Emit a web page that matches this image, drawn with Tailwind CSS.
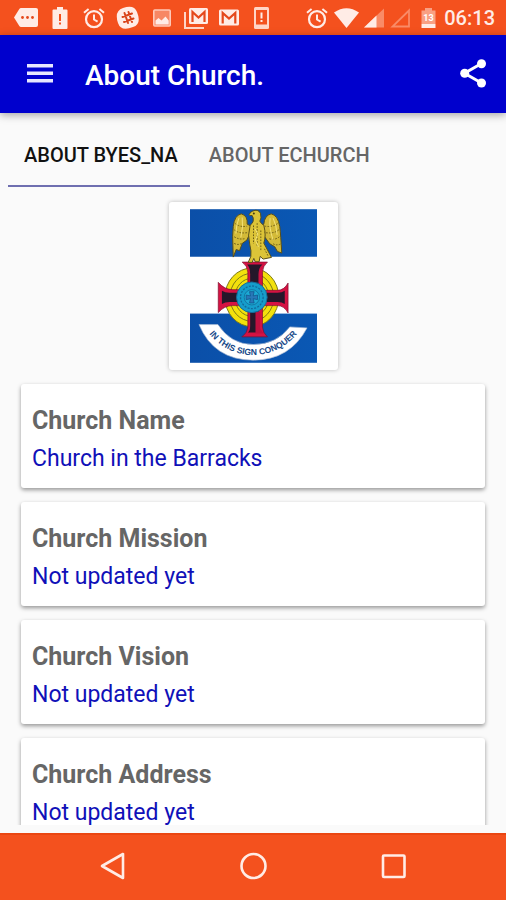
<!DOCTYPE html>
<html lang="en">
<head>
<meta charset="utf-8">
<meta name="viewport" content="width=device-width, initial-scale=1">
<title>About Church</title>
<script src="https://cdn.jsdelivr.net/npm/@tailwindcss/browser@4"></script>
</head>
<body class="flex h-screen flex-col overflow-hidden bg-[#fafafa] font-[Roboto,sans-serif]">

<svg class="hidden" aria-hidden="true">
  <symbol id="alarm" viewBox="0 0 24 24">
    <circle cx="12" cy="13.200" r="8" fill="none" stroke="currentColor" stroke-width="2.200"/>
    <path d="M12 8.500v5l3.600 2.200M2 6.800l4.600-3.900M22 6.800l-4.600-3.900" fill="none" stroke="currentColor" stroke-width="2"/>
  </symbol>
</svg>

<!-- Status bar -->
<div class="flex h-[35px] shrink-0 items-center justify-between bg-[#f4511e] pr-[11px] pl-[14px] text-[#ffece6]">
  <div class="flex items-center gap-[10px]">
    <svg class="size-6" viewBox="0 0 24 24" fill="currentColor"><path d="M7 2h15q2 0 2 2v15q0 2-2 2H7q-1 0-1.700-1L0 11.500 5.300 3Q6 2 7 2z"/><g fill="#e5481b"><circle cx="8.500" cy="11.500" r="1.400"/><circle cx="13.500" cy="11.500" r="1.400"/><circle cx="18.500" cy="11.500" r="1.400"/></g></svg>
    <svg class="size-6" viewBox="0 0 24 24" fill="currentColor"><path d="M9 1h6v2.500h3.500q1 0 1 1V22q0 1-1 1h-13q-1 0-1-1V4.500q0-1 1-1H9z"/><path fill="#f4511e" d="M11 8h2v7h-2zM11 16.500h2v2h-2z"/></svg>
    <svg class="size-6"><use href="#alarm"/></svg>
    <svg class="size-6" viewBox="0 0 24 24"><path fill="currentColor" d="M7 2q11-4 14 4 5 12-4 15Q5 26 2 17-2 5 7 2z"/><path d="M8.500 7l3.500 10M12.500 6l3.500 10M6.500 11l9.500-3.500M8 16l9.500-3.500" stroke="#d9441a" stroke-width="2" stroke-linecap="round"/></svg>
    <svg class="size-6" viewBox="0 0 24 24"><rect x="3.800" y="4" width="16.400" height="16" rx="1" fill="#f78764" stroke="#ffc9b8" stroke-width="1.600"/><path fill="#ffece6" d="M5.500 18.500v-4l3-2.500 3 2.500 4-4 3.200 4v4z"/></svg>
    <svg class="size-6" viewBox="0 0 24 24"><path fill="none" stroke="#ffd5c7" stroke-width="2" d="M1 6v16h19"/><rect x="5" y="2" width="19" height="16" rx="1.500" fill="currentColor"/><path fill="none" stroke="#e5481b" stroke-width="2.200" d="M8.500 16V6l6 5.500 6-5.500v10"/></svg>
    <svg class="size-6" viewBox="0 0 24 24"><rect x="1" y="3.500" width="20" height="16" rx="1.500" fill="currentColor"/><path fill="none" stroke="#e5481b" stroke-width="2.200" d="M4.700 17.500V7l6.300 5.500L17.300 7v10.500"/></svg>
    <svg class="size-6" viewBox="0 0 24 24"><rect x="2" y="1" width="15" height="22" rx="1.500" fill="#ffd5c7"/><rect x="4" y="4" width="11" height="14.500" fill="#f4511e"/><path fill="currentColor" d="M8.500 6.500h2v6h-2zM8.500 14h2v2h-2z"/></svg>
  </div>
  <div class="flex items-center gap-[3px]">
    <svg class="size-6"><use href="#alarm"/></svg>
    <svg class="h-6 w-7" viewBox="0 0 28 24"><path fill="currentColor" d="M2 6.500Q14.500-2 27 6.500L14.500 22z"/></svg>
    <svg class="size-6" viewBox="0 0 24 24"><path fill="#f98b67" d="M21 2.500v19H1z"/><path fill="currentColor" d="M13.500 9.600v11.900H1z"/></svg>
    <svg class="size-6" viewBox="0 0 24 24"><path fill="none" stroke="#f98b67" stroke-width="1.800" d="M19 4.500v16H2.500z"/></svg>
    <svg class="size-6" viewBox="0 0 24 24"><path fill="#f9a083" d="M8 2h7v2.500h3.500V18h-14V4.500H8z"/><path fill="currentColor" d="M4.500 18h14v4h-14z"/><text x="11.500" y="14.500" text-anchor="middle" font-size="9" font-weight="700" fill="#fff">13</text></svg>
    <span class="text-[20px] leading-6 font-medium">06:13</span>
  </div>
</div>

<!-- App bar -->
<header class="relative z-10 flex h-[78px] shrink-0 items-center bg-[#0000cd] pr-4 pl-6 text-white shadow-[0_2px_8px_rgba(0,0,0,0.35)]">
  <button type="button" aria-label="Open menu" class="size-8">
    <svg class="size-8" viewBox="0 0 32 32"><path fill="#e6e6ff" d="M3 6h26v3.500H3zM3 13.500h26V17H3zM3 21h26v3.500H3z"/></svg>
  </button>
  <h1 class="ml-[29px] flex-1 pt-1 text-[28px] leading-8 font-medium">About Church.</h1>
  <button type="button" aria-label="Share" class="size-8">
    <svg class="size-8" viewBox="0 0 32 32" fill="#fff"><path d="M23.500 5.500L6.500 15.300l17 9.700" fill="none" stroke="#fff" stroke-width="3"/><circle cx="23.500" cy="5.700" r="4.500"/><circle cx="6.700" cy="15.300" r="4.500"/><circle cx="23.500" cy="25" r="4.500"/></svg>
  </button>
</header>

<!-- Tabs -->
<nav class="flex h-[74px] shrink-0 items-stretch gap-[3px] pl-2 text-[20px] leading-6 font-medium">
  <a href="#byes" aria-current="page" class="flex items-center border-b-2 border-[#6f6fb0] pt-3 pr-3 pl-4 text-[#111]">ABOUT BYES_NA</a>
  <a href="#echurch" class="flex items-center border-b-2 border-transparent pt-3 pr-3 pl-4 text-[#666]">ABOUT ECHURCH</a>
</nav>

<!-- Content -->
<main id="byes" class="mb-2 flex min-h-0 flex-1 flex-col gap-[14px] overflow-hidden px-[21px] pt-[15px]">
  <figure class="shrink-0 self-center rounded-[3px] bg-white px-[21px] py-[7px] shadow-[0_0_4px_rgba(0,0,0,0.25)]">
    <svg class="h-[154px] w-[127px]" viewBox="86 41 382 462" role="img" aria-label="Church emblem">
      <defs>
        <linearGradient id="sky" x2="1" y2="0"><stop stop-color="#0b4fa8"/><stop offset="1" stop-color="#0a58b4"/></linearGradient>
        <path id="motto" d="M135 403A168 168 0 0 0 417 403"/>
      </defs>
      <rect x="86" y="41" width="382" height="462" fill="#fff"/>
      <rect x="86" y="41" width="382" height="143" fill="url(#sky)"/>
      <rect x="86" y="355" width="382" height="148" fill="url(#sky)"/>
      <g fill="#f3e10c" stroke="#7d7918" stroke-width="3">
        <ellipse cx="272" cy="306" rx="81" ry="88"/>
        <ellipse cx="272" cy="306" rx="66" ry="72"/>
        <ellipse cx="272" cy="306" rx="51" ry="57"/>
      </g>
      <path fill="#d51243" stroke="#7c0c2c" stroke-width="2" d="M243 200h76q-14 12-15 30v55h45q20 0 32-22v90q-12-22-32-22h-45v64q1 18 15 30h-77q17-12 18-30v-64h-45q-26 0-44 21v-91q18 22 44 22h45v-53q-1-18-17-30z"/>
      <path fill="#25172a" d="M258 207h46q-12 10-12 30v55h57q14 0 22-6v40q-8-6-22-6h-57v72q0 15 6 20h-38q7-5 7-20v-72h-62q-14 0-23 6v-40q9 6 23 6h62v-55q0-20-9-30z"/>
      <path fill="#c01040" d="M283 350h14v50l10 15h-24z"/>
      <circle cx="272" cy="306" r="46" fill="#169dcb" stroke="#166a99" stroke-width="3"/>
      <circle cx="272" cy="306" r="34" fill="none" stroke="#126a9c" stroke-width="4" stroke-dasharray="6 4"/>
      <circle cx="272" cy="306" r="23" fill="#1ca9d4" stroke="#12608d" stroke-width="2"/>
      <path fill="#2878b8" stroke="#0f4f86" stroke-width="2" d="M265 289h14l-3 13 13-3v14l-13-3 3 13h-14l3-13-13 3v-14l13 3z"/>
      <g stroke="#594e18" stroke-width="3" stroke-linejoin="round">
        <path fill="#d3ba38" d="M270 92l-12-6q2-26-18-31-20 4-24 38-3 30-1 58l1 34 9-23 10 4 8-22 14-10 11-24z"/>
        <path fill="#d3ba38" d="M298 92l10-6q2-26 22-31 20 4 26 38 3 25 6 80l-13-5-8-14-15-9-14-19-12-14z"/>
        <path fill="#dcc438" d="M273 60q-10 2-9-3 3-8 10-10 16-8 24 6 4 16-2 24 4 8 12 12 8 32 0 54l23 43-25 5-9-8-3 16h-12l-4-10-5 12h-12l8-18q2-18-3-34-8-30 1-60 8-6 9-12 2-10-3-17z"/>
      </g>
      <path fill="none" stroke="#6b5c16" stroke-width="3" stroke-dasharray="5 4" d="M222 84q13 12 36 8M219 103q15 13 43 8M219 124q16 10 34 5M219 144q12 6 22 0M349 84q-15 12-38 8M353 103q-15 13-44 8M355 124q-15 12-34 5M358 146q-12 5-22-1M277 90v55M288 83v72M299 105v60M310 160l12 24"/>
      <path fill="none" stroke="#f2e27a" stroke-width="3" d="M233 68q-8 20-9 46M243 66q4 25-4 60M336 68q10 20 12 50M327 68q-4 28 9 66M282 100l8 16-7 18 9 20"/>
      <circle cx="278" cy="54" r="3" fill="#423914"/>
      <path fill="#fff" stroke="#aabbd3" stroke-width="2" d="M113 388h57q39 60 106 60 70 0 110-53l52 3q-51 97-162 97-118 0-163-107z"/>
      <text fill="#174887" font-family="Liberation Sans" font-weight="700" font-size="26"><textPath href="#motto" startOffset="50%" text-anchor="middle">IN THIS SIGN CONQUER</textPath></text>
    </svg>
  </figure>

  <section class="shrink-0 rounded-[3px] bg-white px-[11px] pt-[21px] pb-[13px] shadow-[0_2px_4px_rgba(0,0,0,0.4)]">
    <h2 class="text-[25px] leading-8 font-bold text-[#666]">Church Name</h2>
    <p class="mt-[6px] text-[23px] leading-8 text-[#1010b8]">Church in the Barracks</p>
  </section>
  <section class="shrink-0 rounded-[3px] bg-white px-[11px] pt-[21px] pb-[13px] shadow-[0_2px_4px_rgba(0,0,0,0.4)]">
    <h2 class="text-[25px] leading-8 font-bold text-[#666]">Church Mission</h2>
    <p class="mt-[6px] text-[23px] leading-8 text-[#1010b8]">Not updated yet</p>
  </section>
  <section class="shrink-0 rounded-[3px] bg-white px-[11px] pt-[21px] pb-[13px] shadow-[0_2px_4px_rgba(0,0,0,0.4)]">
    <h2 class="text-[25px] leading-8 font-bold text-[#666]">Church Vision</h2>
    <p class="mt-[6px] text-[23px] leading-8 text-[#1010b8]">Not updated yet</p>
  </section>
  <section class="shrink-0 rounded-[3px] bg-white px-[11px] pt-[21px] pb-[13px] shadow-[0_2px_4px_rgba(0,0,0,0.4)]">
    <h2 class="text-[25px] leading-8 font-bold text-[#666]">Church Address</h2>
    <p class="mt-[6px] text-[23px] leading-8 text-[#1010b8]">Not updated yet</p>
  </section>
</main>

<!-- System navigation -->
<footer class="flex h-[67px] shrink-0 items-center justify-center gap-[108px] border-t-2 border-[#ea4612] bg-[#f4511e] pb-1 text-[#ffece6]">
  <button type="button" aria-label="Back" class="size-8"><svg class="size-8" viewBox="0 0 32 32" fill="none" stroke="currentColor" stroke-width="2.600" stroke-linejoin="round"><path d="M26 4v24L5 16z"/></svg></button>
  <button type="button" aria-label="Home" class="size-8"><svg class="size-8" viewBox="0 0 32 32" fill="none" stroke="currentColor" stroke-width="2.600"><circle cx="16.500" cy="16" r="12"/></svg></button>
  <button type="button" aria-label="Recent apps" class="size-8"><svg class="size-8" viewBox="0 0 32 32" fill="none" stroke="currentColor" stroke-width="2.600"><rect x="6" y="5.500" width="21.500" height="21.500" rx="1"/></svg></button>
</footer>
</body>
</html>
